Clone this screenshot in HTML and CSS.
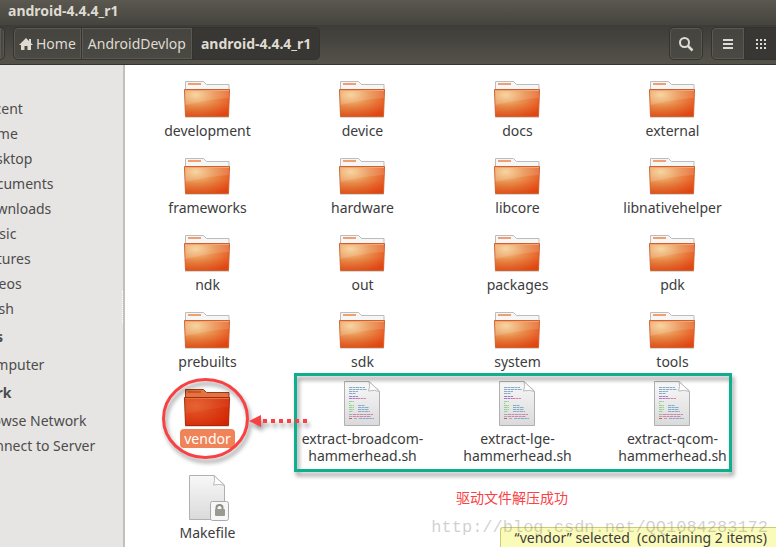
FILE: index.html
```html
<!DOCTYPE html>
<html lang="en">
<head>
  <meta charset="UTF-8">
  <meta name="viewport" content="width=device-width, initial-scale=1.0">
  <title>android-4.4.4_r1</title>
  <link rel="stylesheet" href="styles.css">
</head>
<body>

<!-- shared icons -->
<svg class="defs" width="0" height="0" aria-hidden="true">
  <defs>
    <radialGradient id="orange" cx="0.25" cy="0.2" r="0.95">
      <stop offset="0" stop-color="#f6cf94"/>
      <stop offset="0.45" stop-color="#e98f4d"/>
      <stop offset="1" stop-color="#e84a16"/>
    </radialGradient>
    <radialGradient id="red" cx="0.25" cy="0.3" r="0.9">
      <stop offset="0" stop-color="#e45c28"/>
      <stop offset="1" stop-color="#d32405"/>
    </radialGradient>
    <linearGradient id="paper" x1="0" y1="0" x2="0" y2="1">
      <stop offset="0" stop-color="#f8f8f8"/>
      <stop offset="1" stop-color="#dadada"/>
    </linearGradient>
    <linearGradient id="shade" x1="0" y1="0" x2="0" y2="1">
      <stop offset="0.5" stop-color="#c83c08" stop-opacity="0"/>
      <stop offset="1" stop-color="#c83c08" stop-opacity="0.3"/>
    </linearGradient>
    <symbol id="folder" viewBox="1 1 48 48">
      <path d="M2 47.500h44" stroke="#000" stroke-opacity="0.15"/>
      <path d="M2.500 22V11.500h18l3 3h22.500V22z" fill="#f6f6f6" stroke="#bcbcbc"/>
      <rect x="5" y="13" width="13" height="2" fill="#f0a070"/>
      <path d="M1.500 19.500h45l-1 27h-43z" fill="url(#orange)" stroke="#d0602c"/>
      <path d="M2 20h44l-1 26H3z" fill="url(#shade)"/>
      <path d="M2 20h44v8Q28 29 2 35z" fill="#fff" fill-opacity="0.13"/>
      <path d="M2 20.500h44" stroke="#f2a672"/>
    </symbol>
    <symbol id="folder-selected" viewBox="1 0 48 48">
      <path d="M2 47.500h44" stroke="#000" stroke-opacity="0.15"/>
      <path d="M2.500 22V10.500h18l3 3h22.500V22z" fill="#df7444" stroke="#9c3a18"/>
      <rect x="5" y="12" width="13" height="2" fill="#d8501c"/>
      <path d="M1.500 18.500h45l-1 28h-43z" fill="url(#red)" stroke="#a92808"/>
      <path d="M2 19h44v9Q28 29 2 35z" fill="#fff" fill-opacity="0.05"/>
      <path d="M2 19.500h44" stroke="#e87240"/>
    </symbol>
    <symbol id="page" viewBox="0 0 48 48">
      <path d="M6.500 2.500H31L41.500 12v34.500h-35z" fill="url(#paper)" stroke="#b0b0b0"/>
      <path d="M31 2.500q1.500 5-.5 9.500 6-1.500 11 .5z" fill="#fff" stroke="#bbb"/>
    </symbol>
    <symbol id="script" viewBox="1 0 48 48">
      <use href="#page" width="48" height="48"/>
      <g fill="none" stroke-dasharray="3 .5">
        <path d="M11 8.500h16M11 10.500h18M11 12.500h9M11 14.500h7M20 26.500h7M20 28.500h11M20 30.500h11M20 32.500h12M21 39.500h15" stroke="#86abc8"/>
        <path d="M11 17.500h9M11 19.500h8" stroke="#a77bc8"/>
        <path d="M19 19.500h9M15 35.500h20M15 37.500h18" stroke="#ce86ac"/>
        <path d="M11 22.500h5M11 26.500h5M11 28.500h5M11 30.500h5M11 32.500h4" stroke="#91d28c"/>
        <path d="M11 24.500h1M11 35.500h4M11 37.500h4M16 39.500h3" stroke="#aaa"/>
        <path d="M11 39.500h3" stroke="#e05555"/>
      </g>
    </symbol>
    <symbol id="page-locked" viewBox="1 0 48 48">
      <use href="#page" width="48" height="48"/>
      <rect x="27.500" y="28.500" width="18" height="19" rx="2" fill="#f7f7f7" stroke="#aaa"/>
      <path d="M33.500 37v-2.500q0-2.500 3-2.500t3 2.500V37" fill="none" stroke="#8d8d85" stroke-width="2"/>
      <rect x="32" y="36" width="10" height="7" rx="1" fill="#9a9a92"/>
    </symbol>
  </defs>
</svg>

<header class="header">
  <h1 class="title">android-4.4.4_r1</h1>
  <div class="toolbar">
    <button class="btn back" aria-label="Forward"></button>
    <nav class="group path">
      <button class="btn">
        <svg width="14" height="14" viewBox="0 0 14 14"><path d="M7 1L0 8h2v5h3.500V9h3v4H12V8h2l-2-2V2h-2v2z" fill="#dfdbd2"/></svg>
        Home
      </button>
      <button class="btn">AndroidDevlop</button>
      <button class="btn active">android-4.4.4_r1</button>
    </nav>
    <button class="btn search" aria-label="Search">
      <svg width="16" height="16" viewBox="0 0 16 16" fill="none" stroke="#dfdbd2"><circle cx="6.500" cy="6.500" r="4.500" stroke-width="2"/><path d="M10 10l4.500 4.500" stroke-width="2.500"/></svg>
    </button>
    <div class="group views">
      <button class="btn" aria-label="List">
        <svg width="10" height="10" viewBox="0 0 10 10" fill="#dfdbd2"><path d="M0 0h10v2H0zM0 4h10v2H0zM0 8h10v2H0z"/></svg>
      </button>
      <button class="btn active" aria-label="Icons">
        <svg width="10" height="10" viewBox="0 0 10 10" fill="#dfdbd2"><path d="M0 0h2v2H0zM4 0h2v2H4zM8 0h2v2H8zM0 4h2v2H0zM4 4h2v2H4zM8 4h2v2H8zM0 8h2v2H0zM4 8h2v2H4zM8 8h2v2H8z"/></svg>
      </button>
    </div>
  </div>
</header>

<div class="window">
  <aside class="sidebar">
    <ul>
      <li>Recent</li>
      <li>Home</li>
      <li>Desktop</li>
      <li>Documents</li>
      <li>Downloads</li>
      <li>Music</li>
      <li>Pictures</li>
      <li>Videos</li>
      <li>Trash</li>
    </ul>
    <h2>Devices</h2>
    <ul>
      <li>Computer</li>
    </ul>
    <h2>Network</h2>
    <ul>
      <li>Browse Network</li>
      <li>Connect to Server</li>
    </ul>
    <span class="grip"></span>
  </aside>

  <main class="files">
    <div class="grid">
      <div class="file"><svg><use href="#folder"/></svg><span>development</span></div>
      <div class="file"><svg><use href="#folder"/></svg><span>device</span></div>
      <div class="file"><svg><use href="#folder"/></svg><span>docs</span></div>
      <div class="file"><svg><use href="#folder"/></svg><span>external</span></div>
      <div class="file"><svg><use href="#folder"/></svg><span>frameworks</span></div>
      <div class="file"><svg><use href="#folder"/></svg><span>hardware</span></div>
      <div class="file"><svg><use href="#folder"/></svg><span>libcore</span></div>
      <div class="file"><svg><use href="#folder"/></svg><span>libnativehelper</span></div>
      <div class="file"><svg><use href="#folder"/></svg><span>ndk</span></div>
      <div class="file"><svg><use href="#folder"/></svg><span>out</span></div>
      <div class="file"><svg><use href="#folder"/></svg><span>packages</span></div>
      <div class="file"><svg><use href="#folder"/></svg><span>pdk</span></div>
      <div class="file"><svg><use href="#folder"/></svg><span>prebuilts</span></div>
      <div class="file"><svg><use href="#folder"/></svg><span>sdk</span></div>
      <div class="file"><svg><use href="#folder"/></svg><span>system</span></div>
      <div class="file"><svg><use href="#folder"/></svg><span>tools</span></div>
      <div class="file selected"><svg><use href="#folder-selected"/></svg><span>vendor</span></div>
      <div class="file"><svg><use href="#script"/></svg><span>extract-broadcom-<br>hammerhead.sh</span></div>
      <div class="file"><svg><use href="#script"/></svg><span>extract-lge-<br>hammerhead.sh</span></div>
      <div class="file"><svg><use href="#script"/></svg><span>extract-qcom-<br>hammerhead.sh</span></div>
      <div class="file"><svg><use href="#page-locked"/></svg><span>Makefile</span></div>
    </div>

    <!-- marks drawn over the files -->
    <svg class="marks" width="620" height="120" viewBox="0 0 620 120" fill="none">
      <ellipse cx="75.500" cy="53.500" rx="42" ry="39" stroke="#f94144" stroke-width="3"/>
      <path d="M119 56l12-6v12z" fill="#f94144"/>
      <rect x="165.500" y="9.500" width="435" height="96" stroke="#0fae8f" stroke-width="3"/>
      <path d="M133 56h44" stroke="#f94144" stroke-width="4" stroke-dasharray="4"/>
    </svg>
    <p class="note">驱动文件解压成功</p>
    <p class="status">“vendor” selected&nbsp; (containing 2 items)</p>
    <p class="watermark">http://blog.csdn.net/QQ1084283172</p>
  </main>
</div>

</body>
</html>
```
FILE: styles.css
```css
* {
  box-sizing: border-box;
}

body {
  margin: 0;
  min-height: 100vh;
  display: flex;
  flex-direction: column;
  overflow: hidden;
  font-family: "Noto Sans", "Noto Sans CJK SC", sans-serif;
  font-size: 14px;
  color: #3c3c3c;
  background: #fff;
}

h1, h2, p, ul {
  margin: 0;
  padding: 0;
}

.defs {
  position: absolute;
}

/* header */
.header {
  color: #dfdbd2;
  border-bottom: 1px solid #35342f;
}

.title {
  height: 25px;
  padding-left: 8px;
  font-size: 14px;
  line-height: 22px;
  background: linear-gradient(#5a584f, #45443e);
}

.toolbar {
  display: flex;
  align-items: center;
  height: 39px;
  padding-bottom: 2px;
  background: linear-gradient(#3d3c38, #55524a);
}

.group {
  display: flex;
}

.btn {
  display: flex;
  align-items: center;
  justify-content: center;
  gap: 3px;
  height: 33px;
  padding: 0 6px;
  font: inherit;
  color: inherit;
  white-space: nowrap;
  background: linear-gradient(#45443f, #4b4943);
  border: 1px solid #34332f;
  border-radius: 5px;
  box-shadow: inset 0 0 0 1px #5b5951;
}

.group .btn:first-child {
  padding: 0 5px;
  border-radius: 5px 0 0 5px;
}

.group .btn:not(:first-child) {
  border-left: 0;
  border-radius: 0;
}

.group .btn:last-child {
  border-radius: 0 5px 5px 0;
}

.group .btn.active {
  padding: 0 8px;
  font-weight: bold;
  background: #383733;
  box-shadow: none;
}

.back {
  width: 5px;
  padding: 0;
  border-left: 0;
  border-radius: 0 5px 5px 0;
}

.path {
  margin-left: 8px;
}

.search {
  width: 34px;
  margin-left: auto;
}

.views {
  margin-left: 8px;
}

.views .btn {
  width: 34px;
}

.views .btn:last-child {
  width: 31px;
  border-right: 0;
  border-radius: 0;
}

/* content */
.window {
  flex: 1;
  display: flex;
}

.sidebar {
  position: relative;
  flex: 0 0 125px;
  padding-top: 31px;
  overflow: hidden;
  white-space: nowrap;
  color: #4c4c4c;
  background: #e6e5e3;
  border-right: 2px solid #c4bfb9;
}

.sidebar ul {
  margin-left: -22px;
  list-style: none;
}

.sidebar li {
  line-height: 25px;
}

.sidebar h2 {
  margin-left: -50px;
  font-size: 14px;
  line-height: 31px;
}

.grip {
  position: absolute;
  top: 226px;
  right: 0;
  height: 32px;
  border-right: 1px dotted #fff;
}

.files {
  position: relative;
  flex: 1;
}

.grid {
  display: grid;
  grid-template-columns: repeat(4, 155px);
  row-gap: 9px;
  padding: 6px 0 0 5px;
}

.file {
  display: flex;
  flex-direction: column;
  align-items: center;
  gap: 3px;
  line-height: 17px;
  text-align: center;
}

.file svg {
  width: 48px;
  height: 48px;
}

.selected span {
  padding: 0 3px;
  color: #fff;
  background: #f08358;
  border-radius: 3px;
  box-shadow: 0 0 0 1px #f08358;
}

.marks {
  position: absolute;
  top: 300px;
  left: 5px;
  overflow: visible;
  filter: drop-shadow(2px 4px 2px rgba(0, 0, 0, 0.4));
}

.note {
  position: absolute;
  top: 423px;
  left: 331px;
  font-size: 14px;
  line-height: 20px;
  color: #f94144;
}

.status {
  position: absolute;
  right: 0;
  bottom: 0;
  padding: 0 9px 0 14px;
  line-height: 19px;
  white-space: nowrap;
  background: #fbfbb9;
  border: 1px solid #cfcd74;
  border-width: 1px 0 0 1px;
  border-radius: 3px 0 0 0;
}

.watermark {
  position: absolute;
  right: 8px;
  bottom: 9px;
  font-family: "Liberation Mono", monospace;
  font-size: 17px;
  line-height: 20px;
  color: rgba(120, 120, 120, 0.35);
}
```
